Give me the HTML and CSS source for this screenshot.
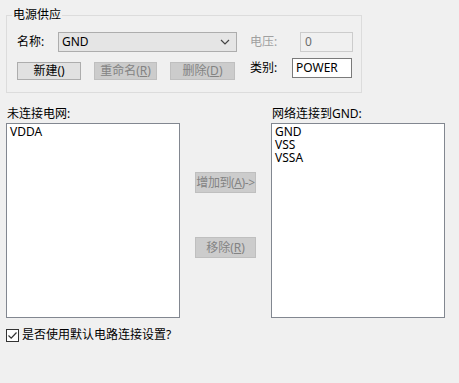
FILE: index.html
```html
<!DOCTYPE html>
<html lang="zh">
<head>
  <meta charset="UTF-8">
  <title>电源供应</title>
  <link rel="stylesheet" href="styles.css">
</head>
<body>

  <div class="group">
    <span class="legend">电源供应</span>
    <div class="row">
      <span class="lbl name-lbl">名称:</span>
      <div class="combo">
        <span>GND</span>
        <svg width="10" height="6" viewBox="0 0 10 6"><path d="M1 1 L5 5 L9 1" fill="none" stroke="#444" stroke-width="1.2"/></svg>
      </div>
      <span class="lbl volt-lbl disabled">电压:</span>
      <div class="field field-dis volt">0</div>
    </div>
    <div class="row row2">
      <div class="btns">
        <button class="btn new">新建()</button>
        <button class="btn btn-dis rename">重命名(<u>R</u>)</button>
        <button class="btn btn-dis del">删除(<u>D</u>)</button>
      </div>
      <span class="lbl type-lbl">类别:</span>
      <div class="field type">POWER</div>
    </div>
  </div>

  <div class="lists">
    <div class="col">
      <div class="list-lbl">未连接电网:</div>
      <div class="listbox">
        <div class="item">VDDA</div>
      </div>
    </div>
    <div class="mid">
      <button class="btn btn-dis add">增加到(<u>A</u>)-&gt;</button>
      <button class="btn btn-dis remove">移除(<u>R</u>)</button>
    </div>
    <div class="col">
      <div class="list-lbl">网络连接到GND:</div>
      <div class="listbox">
        <div class="item">GND</div>
        <div class="item">VSS</div>
        <div class="item">VSSA</div>
      </div>
    </div>
  </div>

  <label class="check">
    <span class="box">
      <svg width="11" height="11" viewBox="0 0 11 11"><path d="M1.5 5.5 L4.2 8.2 L9.5 2.5" fill="none" stroke="#333" stroke-width="1.2"/></svg>
    </span>
    是否使用默认电路连接设置?
  </label>

</body>
</html>
```

FILE: styles.css
```css
body {
  margin: 0;
  width: 459px;
  height: 383px;
  background: #f0f0f0;
  font-family: "Noto Sans", "Noto Sans CJK SC", sans-serif;
  font-size: 12px;
  color: #000;
  overflow: hidden;
}

.group {
  position: relative;
  box-sizing: border-box;
  width: 356px;
  height: 78px;
  margin: 15px 0 0 6px;
  padding: 16px 0 0 10px;
  border: 1px solid #dcdcdc;
}

.legend {
  position: absolute;
  top: -9px;
  left: 5px;
  padding: 0 1px;
  line-height: 16px;
  background: #f0f0f0;
}

.row {
  display: flex;
  align-items: flex-start;
}

.row2 {
  margin-top: 6px;
}

.lbl {
  line-height: 20px;
}

.name-lbl {
  width: 41px;
}

.volt-lbl {
  width: 50px;
  margin-left: 13px;
}

.type-lbl {
  width: 42px;
  margin-left: 13px;
}

.disabled {
  color: #a0a0a0;
}

.combo {
  box-sizing: border-box;
  width: 179px;
  height: 20px;
  padding: 0 6px 0 3px;
  border: 1px solid #adadad;
  background: #e5e5e5;
  display: flex;
  align-items: center;
  justify-content: space-between;
  line-height: 18px;
}

.field {
  box-sizing: border-box;
  height: 20px;
  padding: 0 3px;
  border: 1px solid #7a7a7a;
  background: #fff;
  line-height: 18px;
}

.field-dis {
  border-color: #cccccc;
  background: #f0f0f0;
  color: #6d6d6d;
}

.volt {
  width: 53px;
  padding-left: 4px;
}

.type {
  width: 60px;
}

.btns {
  width: 220px;
  padding-top: 4px;
  display: flex;
  gap: 13px;
}

.btn {
  box-sizing: border-box;
  height: 18px;
  padding: 0;
  border: 1px solid #adadad;
  background: #e1e1e1;
  font-family: inherit;
  font-size: 12px;
  line-height: 16px;
  color: #000;
  white-space: nowrap;
  overflow: hidden;
}

.btn u {
  text-decoration: underline;
}

.btn-dis {
  border-color: #bfbfbf;
  background: #cccccc;
  color: #838383;
}

.new { width: 64px; }
.rename { width: 63px; }
.del { width: 65px; }

.lists {
  display: flex;
  margin: 12px 0 0 6px;
}

.col {
  width: 174px;
}

.list-lbl {
  line-height: 18px;
  padding-left: 1px;
}

.listbox {
  box-sizing: border-box;
  height: 195px;
  padding: 1px 3px;
  border: 1px solid #828790;
  background: #fff;
}

.item {
  line-height: 13px;
}

.mid {
  width: 91px;
  padding-top: 67px;
  display: flex;
  flex-direction: column;
  align-items: center;
  gap: 44px;
}

.add, .remove {
  width: 61px;
  height: 21px;
  line-height: 19px;
}

.add {
  letter-spacing: -0.4px;
}

.check {
  display: flex;
  align-items: center;
  gap: 3px;
  margin: 10px 0 0 6px;
  line-height: 14px;
}

.box {
  box-sizing: border-box;
  width: 13px;
  height: 13px;
  border: 1px solid #333;
  background: #fff;
  display: flex;
  align-items: center;
  justify-content: center;
}
```
